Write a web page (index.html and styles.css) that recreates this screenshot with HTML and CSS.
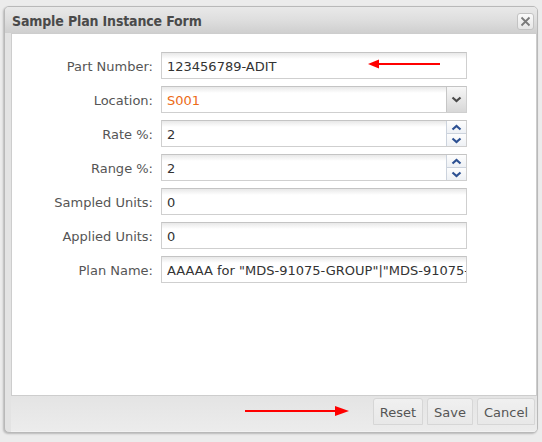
FILE: index.html
```html
<!DOCTYPE html>
<html>
<head>
<meta charset="utf-8">
<link rel="stylesheet" href="styles.css">
</head>
<body>
<div class="backdrop">
  <div class="window">
    <div class="header">
      <span class="title">Sample Plan Instance Form</span>
      <span class="close">
        <svg width="11" height="11" viewBox="0 0 11 11"><path d="M1.5 1.5 L9.5 9.5 M9.5 1.5 L1.5 9.5" stroke="#7a7a7a" stroke-width="1.8" fill="none"/></svg>
      </span>
    </div>
    <div class="body">
      <div class="form">
        <label class="lbl">Part Number:</label>
        <div class="field"><span class="val">123456789-ADIT</span></div>

        <label class="lbl">Location:</label>
        <div class="field"><span class="val orange">S001</span>
          <span class="trigger combo">
            <svg width="11" height="7" viewBox="0 0 11 7"><path d="M1.5 1.5 L5.5 5 L9.5 1.5" stroke="#4a4a4a" stroke-width="2.2" fill="none"/></svg>
          </span>
        </div>

        <label class="lbl">Rate %:</label>
        <div class="field"><span class="val">2</span>
          <span class="trigger spin">
            <span class="half"><svg width="11" height="7" viewBox="0 0 11 7"><path d="M1.5 5.5 L5.5 2 L9.5 5.5" stroke="#2d5193" stroke-width="2.2" fill="none"/></svg></span>
            <span class="half"><svg width="11" height="7" viewBox="0 0 11 7"><path d="M1.5 1.5 L5.5 5 L9.5 1.5" stroke="#2d5193" stroke-width="2.2" fill="none"/></svg></span>
          </span>
        </div>

        <label class="lbl">Range %:</label>
        <div class="field"><span class="val">2</span>
          <span class="trigger spin">
            <span class="half"><svg width="11" height="7" viewBox="0 0 11 7"><path d="M1.5 5.5 L5.5 2 L9.5 5.5" stroke="#2d5193" stroke-width="2.2" fill="none"/></svg></span>
            <span class="half"><svg width="11" height="7" viewBox="0 0 11 7"><path d="M1.5 1.5 L5.5 5 L9.5 1.5" stroke="#2d5193" stroke-width="2.2" fill="none"/></svg></span>
          </span>
        </div>

        <label class="lbl">Sampled Units:</label>
        <div class="field"><span class="val">0</span></div>

        <label class="lbl">Applied Units:</label>
        <div class="field"><span class="val">0</span></div>

        <label class="lbl">Plan Name:</label>
        <div class="field"><span class="val clip">AAAAA for "MDS-91075-GROUP"|"MDS-91075-GROUP"</span></div>
      </div>
      <svg class="arrow arrow1" width="74" height="10" viewBox="0 0 74 10"><path d="M8 5 H72" stroke="#f00" stroke-width="2"/><path d="M0 5 L11 0.5 L11 9.5 Z" fill="#f00"/></svg>
    </div>
    <div class="footer">
      <svg class="arrow arrow2" width="104" height="12" viewBox="0 0 104 12"><path d="M0 6 H92" stroke="#f00" stroke-width="2"/><path d="M104 6 L90 1 L90 11 Z" fill="#f00"/></svg>
      <span class="btn">Reset</span>
      <span class="btn">Save</span>
      <span class="btn">Cancel</span>
    </div>
  </div>
</div>
</body>
</html>
```

FILE: styles.css
```css
html, body {
  margin: 0;
  padding: 0;
  background: #ececec;
  font-family: "DejaVu Sans", sans-serif;
  font-size: 13px;
}
.backdrop {
  width: 542px;
  height: 442px;
  padding: 5px 0 0 4px;
  box-sizing: border-box;
  border-top: 1px solid #ececec;
}
.window {
  position: relative;
  width: 534px;
  height: 427px;
  box-sizing: border-box;
  border: 1px solid #b9b9b9;
  border-radius: 5px;
  background: #e3e3e3;
  box-shadow: -1px 1px 2px rgba(0,0,0,0.22);
  display: flex;
  flex-direction: column;
  overflow: hidden;
}
.header {
  height: 26px;
  flex: none;
  display: flex;
  align-items: center;
  justify-content: space-between;
  padding: 0 3px 0 7px;
  background: linear-gradient(#e9e9e9 0%, #dedede 50%, #cfcfcf 100%);
}
.title {
  font-family: "DejaVu Sans Condensed", "DejaVu Sans", sans-serif;
  font-weight: bold;
  font-size: 14px;
  color: #4a4a4a;
  letter-spacing: -0.15px;
  padding-top: 2px;
}
.close {
  width: 15px;
  height: 15px;
  border: 1px solid #c3c3c3;
  border-radius: 3px;
  background: linear-gradient(#fafafa, #e6e6e6);
  display: flex;
  align-items: center;
  justify-content: center;
  margin-top: 3px;
}
.body {
  position: relative;
  flex: none;
  height: 363px;
  margin: 0 0 0 6px;
  background: #fff;
  border: 1px solid #cdcdcd;
  box-sizing: border-box;
}
.form {
  display: grid;
  grid-template-columns: 141px 306px;
  grid-auto-rows: 27px;
  column-gap: 8px;
  row-gap: 7px;
  padding-top: 18px;
}
.lbl {
  display: flex;
  align-items: center;
  justify-content: flex-end;
  color: #555;
  padding-top: 1px;
}
.field {
  position: relative;
  box-sizing: border-box;
  border: 1px solid #cfcfcf;
  border-top-color: #c4c4c4;
  background: linear-gradient(#e8e8e8 0, #ffffff 6px);
  display: flex;
  align-items: center;
  padding-left: 5px;
  color: #333;
  overflow: hidden;
}
.val {
  white-space: nowrap;
  padding-top: 1px;
}
.orange { color: #ec6b17; }
.clip { overflow: hidden; }
.trigger {
  position: absolute;
  top: -1px;
  right: -1px;
  bottom: -1px;
  width: 21px;
  box-sizing: border-box;
}
.combo {
  border: 1px solid #c6c6c6;
  background: linear-gradient(#f7f7f7, #d7d7d7);
  display: flex;
  align-items: center;
  justify-content: center;
}
.spin {
  display: flex;
  flex-direction: column;
}
.half {
  flex: 1;
  border: 1px solid #ccd3dd;
  background: linear-gradient(#fdfdfd, #eef1f5);
  display: flex;
  align-items: center;
  justify-content: center;
}
.half + .half { border-top: none; }
.footer {
  position: relative;
  flex: 1;
  margin-left: 6px;
  background: linear-gradient(#e4e4e4, #ececec);
  display: flex;
  justify-content: flex-end;
  align-items: flex-start;
  gap: 4px;
  padding: 2px 2px 0 0;
  border-bottom: 1px solid #f2f2f2;
}
.btn {
  box-sizing: border-box;
  height: 27px;
  padding: 1px 6px 0;
  border: 1px solid #d6d6d6;
  border-radius: 3px 3px 0 0;
  background: linear-gradient(#f0f0f0, #e8e8e8);
  color: #555;
  display: flex;
  align-items: center;
}
.arrow {
  position: absolute;
}
.arrow1 {
  left: 356px;
  top: 25px;
}
.arrow2 {
  left: 234px;
  top: 9px;
}
```
